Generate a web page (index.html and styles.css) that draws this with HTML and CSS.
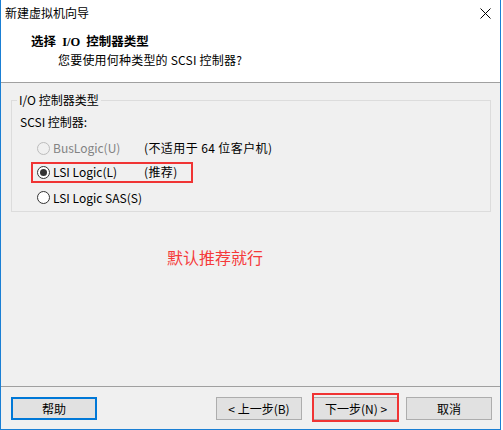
FILE: index.html
```html
<!DOCTYPE html>
<html lang="zh-CN">
<head>
<meta charset="utf-8">
<title>新建虚拟机向导</title>
<link rel="stylesheet" href="styles.css">
</head>
<body>
<div class="window">
  <div class="top">
    <div class="titlebar">
      <span class="title">新建虚拟机向导</span>
      <svg class="close" width="11" height="11" viewBox="0 0 11 11"><path d="M0.5 0.5 L10.5 10.5 M10.5 0.5 L0.5 10.5" stroke="#000" stroke-width="1" fill="none"/></svg>
    </div>
    <div class="header">
      <div class="h-title">选择 I/O 控制器类型</div>
      <div class="h-sub">您要使用何种类型的 SCSI 控制器?</div>
    </div>
  </div>
  <div class="content">
    <fieldset class="group">
      <legend>I/O 控制器类型</legend>
      <div class="caption">SCSI 控制器:</div>
      <div class="row first disabled">
        <span class="radio"></span>
        <span class="lbl">BusLogic(U)</span>
        <span class="note">(不适用于 64 位客户机)</span>
      </div>
      <div class="row">
        <span class="mark"></span>
        <span class="radio checked"></span>
        <span class="lbl">LSI Logic(L)</span>
        <span class="note">(推荐)</span>
      </div>
      <div class="row last">
        <span class="radio"></span>
        <span class="lbl">LSI Logic SAS(S)</span>
      </div>
    </fieldset>
    <div class="hint">默认推荐就行</div>
  </div>
  <div class="footer">
    <button class="btn focus">帮助</button>
    <span class="spacer"></span>
    <button class="btn">&lt; 上一步(B)</button>
    <button class="btn next">下一步(N) &gt;<span class="next-mark"></span></button>
    <button class="btn cancel">取消</button>
  </div>
</div>
</body>
</html>
```

FILE: styles.css
```css
* { box-sizing: border-box; }
html, body { margin: 0; padding: 0; background: #ffffff; }
body {
  font-family: "Noto Sans CJK SC", "Noto Sans", sans-serif;
  font-size: 12px;
  color: #000;
}
.window {
  width: 501px;
  height: 430px;
  border-left: 1px solid #1a7fd4;
  border-right: 1px solid #1a7fd4;
  border-bottom: 1px solid #1a7fd4;
  background: #f0f0f0;
  display: flex;
  flex-direction: column;
}
.top {
  background: #ffffff;
  border-bottom: 1px solid #a0a0a0;
}
.titlebar {
  height: 26px;
  display: flex;
  align-items: center;
  justify-content: space-between;
  padding: 0 9px 0 4px;
}
.title { line-height: 16px; }
.close { display: block; margin-top: 1px; }
.header {
  padding: 8px 0 14px 0;
}
.h-title {
  font-family: "Liberation Serif", "Noto Sans CJK SC", serif;
  font-weight: bold;
  font-size: 12.5px;
  line-height: 16px;
  padding-left: 30px;
  word-spacing: 3px;
}
.h-sub {
  margin-top: 2px;
  line-height: 16px;
  padding-left: 57px;
  letter-spacing: 0.2px;
}
.content {
  flex: 1;
  display: flex;
  flex-direction: column;
}
.group {
  margin: 9px 0 0 10px;
  width: 480px;
  border: 1px solid #dcdcdc;
  padding: 0 0 1px 8px;
}
.group legend {
  margin-left: -3px;
  padding: 0 2px;
  line-height: 16px;
}
.caption {
  margin-top: 6px;
  line-height: 16px;
}
.row {
  position: relative;
  height: 24px;
  display: flex;
  align-items: center;
  padding-left: 17px;
}
.row.first { margin-top: 6px; }
.row.last { height: 25px; margin-top: 1px; }
.radio {
  width: 13px;
  height: 13px;
  border: 1px solid #333;
  border-radius: 50%;
  background: #fff;
  display: flex;
  align-items: center;
  justify-content: center;
  flex: none;
}
.radio.checked::after {
  content: "";
  width: 7px;
  height: 7px;
  border-radius: 50%;
  background: #333;
}
.lbl {
  margin-left: 3px;
  width: 91px;
  line-height: 16px;
  white-space: nowrap;
}
.note { line-height: 16px; letter-spacing: 0.4px; }
.disabled .radio { border-color: #bcbcbc; background: #f0f0f0; }
.disabled .lbl { color: #838383; }
.mark {
  position: absolute;
  left: 11px;
  top: 2px;
  width: 162px;
  height: 21px;
  border: 2px solid #f03434;
}
.hint {
  margin: 35px 0 0 166px;
  font-size: 16px;
  line-height: 20px;
  color: #f53a3a;
}
.footer {
  height: 43px;
  border-top: 1px solid #a0a0a0;
  display: flex;
  align-items: flex-start;
  padding: 10px 8px 0 10px;
}
.spacer { flex: 1; }
.btn {
  position: relative;
  width: 86px;
  height: 23px;
  padding: 0;
  margin: 0;
  font-family: "Noto Sans CJK SC", "Noto Sans", sans-serif;
  font-size: 12px;
  line-height: 16px;
  color: #000;
  background: #e1e1e1;
  border: 1px solid #adadad;
}
.btn.focus { border: 2px solid #0078d7; }
.btn.next { margin-left: 11px; }
.btn.cancel { margin-left: 7px; }
.next-mark {
  position: absolute;
  left: -2px;
  top: -5px;
  width: 87px;
  height: 29px;
  border: 2px solid #f03434;
}
```
